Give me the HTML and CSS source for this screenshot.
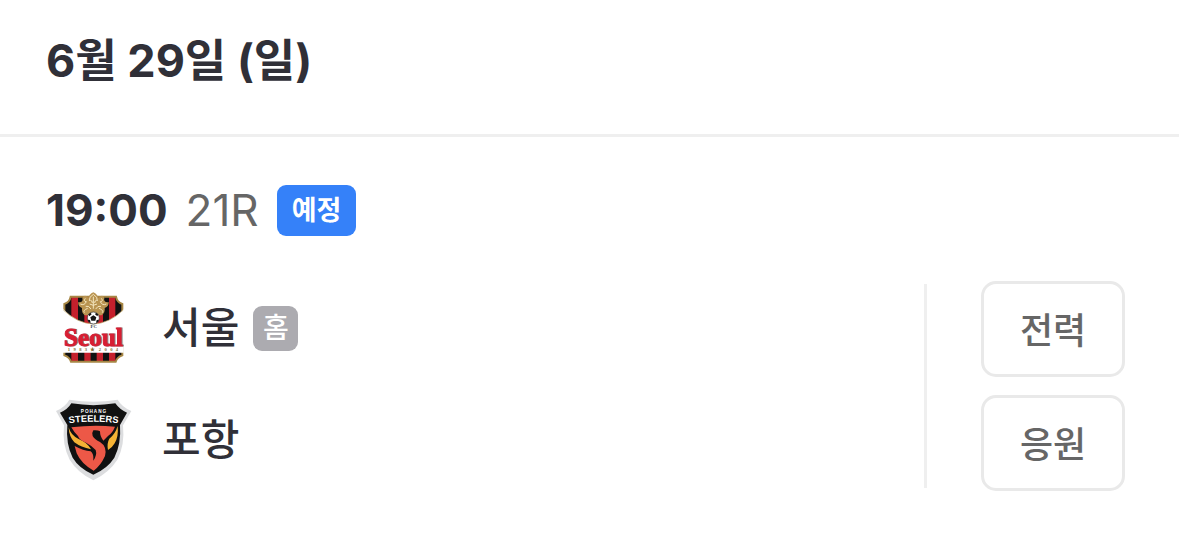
FILE: index.html
```
<!DOCTYPE html>
<html lang="ko">
<head>
    <meta charset="UTF-8">
    <meta name="viewport" content="width=device-width, initial-scale=1.0">
    <title>경기 일정</title>
    <link rel="stylesheet" href="styles.css">
</head>
<body>
    <header class="date-header">
        <h1>6월 29일 (일)</h1>
    </header>

    <main class="match">
        <div class="match-info">
            <span class="time">19:00</span>
            <span class="round">21R</span>
            <span class="status">예정</span>
        </div>

        <div class="match-body">
            <div class="teams">
                <div class="team">
                    <svg class="emblem" viewBox="3 18 252 252" aria-hidden="true">
                        <defs>
                            <clipPath id="shield">
                                <path d="M62 50H198Q201 67 217 72V226Q201 231 197 245H63Q59 231 43 226V72Q59 67 62 50Z"/>
                            </clipPath>
                        </defs>
                        <g clip-path="url(#shield)">
                            <rect x="40" y="45" width="180" height="205" fill="#111"/>
                            <path d="M64 45h20v205H64zM103 45h19v205h-19zM140 45h19v205h-19zM177 45h19v205h-19z" fill="#c5202c"/>
                        </g>
                        <path d="M62 50H198Q201 67 217 72V226Q201 231 197 245H63Q59 231 43 226V72Q59 67 62 50Z" fill="none" stroke="#a78745" stroke-width="6"/>
                        <path d="M36 84Q80 130 130 132Q180 130 225 84L221 202V218H37V202Z" fill="#fff"/>
                        <path d="M40 90Q82 130 130 132Q178 130 220 90" fill="none" stroke="#b79a59" stroke-width="2"/>
                        <path d="M104 106Q94 98 96 84Q83 79 85 66Q95 69 98 60Q94 51 105 47Q112 48 115 54Q117 43 130 37Q143 43 145 54Q149 48 156 47Q166 51 162 60Q166 69 176 66Q177 79 164 84Q166 98 155 106Z" fill="#b99451"/>
                        <path d="M91 72Q103 78 109 65Q99 65 106 55M169 72Q157 78 151 65Q161 65 154 55M118 63Q116 51 130 43Q144 51 142 63M113 85Q98 91 103 98M147 85Q162 91 157 98M119 72Q130 80 141 72M130 50V86M121 61Q127 61 127 69M140 61Q134 61 134 69M107 79Q117 76 123 87M153 79Q143 76 137 87" fill="none" stroke="#f4e6bf" stroke-width="3"/>
                        <circle cx="130" cy="114" r="18" fill="#fff" stroke="#333" stroke-width="2"/>
                        <path d="M130 106l9 6-3 10h-12l-3-10zM115 103l7-5 3 5-7 6zM145 103l-7-5-3 5 7 6zM113 119l7 1 2 8-6-1zM147 119l-7 1-2 8 6-1z" fill="#161616"/>
                        <text class="fc-text" x="131" y="145">FC</text>
                        <text class="seoul-text" x="130" y="197">Seoul</text>
                        <text class="year-text" x="134" y="213">1983★2004</text>
                    </svg>
                    <span class="team-name">서울</span>
                    <span class="home">홈</span>
                </div>
                <div class="team">
                    <svg class="emblem" viewBox="3 24 252 252" aria-hidden="true">
                        <path d="M58 29Q130 41 203 29Q216 51 244 63L219 106Q225 166 202 209Q178 247 130 271Q82 247 59 209Q36 166 42 106L18 63Q46 51 58 29Z" fill="#dcdddf"/>
                        <path d="M64 40Q130 51 196 40Q209 59 231 68L210 105Q214 162 193 203Q173 235 130 254Q87 235 68 203Q47 162 52 105L30 68Q53 59 64 40Z" fill="#111"/>
                        <path d="M56 112Q62 136 86 147Q112 157 123 178Q93 172 73 157Q57 140 56 112Z" fill="#f5b335"/>
                        <path d="M203 108Q206 140 194 160Q186 174 174 180Q170 160 178 146Q196 132 203 108Z" fill="#f5b335"/>
                        <path d="M64 112Q130 103 195 110Q188 128 174 138L160 152Q150 140 150 124Q144 120 130 121Q125 128 128 138Q134 149 150 156Q172 170 165 198Q152 227 131 242Q94 222 80 190L74 168Q100 182 122 184Q132 192 130 212Q142 195 137 180Q124 166 108 158Q88 150 84 138Q74 130 64 112Z" fill="#ed5847"/>
                        <path id="steelers-arc" d="M57 100Q130 90 205 100" fill="none"/>
                        <text class="pohang-text" x="132" y="70">POHANG</text>
                        <text class="steelers-text"><textPath href="#steelers-arc" startOffset="50%">STEELERS</textPath></text>
                    </svg>
                    <span class="team-name">포항</span>
                </div>
            </div>

            <div class="actions">
                <button type="button">전력</button>
                <button type="button">응원</button>
            </div>
        </div>
    </main>
</body>
</html>
```
FILE: styles.css
```
* {
    box-sizing: border-box;
}

body {
    margin: 0;
    font-family: Inter, "Noto Sans CJK KR", sans-serif;
    background-color: #fff;
    color: #303038;
}

.date-header {
    padding: 31px 46px 43px;
    border-bottom: 3px solid #efefef;
}

h1 {
    margin: 0;
    font-size: 45px;
    line-height: 60px;
    font-weight: 700;
}

.match {
    padding: 48px 54px 43px 46px;
}

.match-info {
    display: flex;
    align-items: center;
    gap: 18px;
    font-size: 44px;
    line-height: 51px;
}

.time {
    font-weight: 700;
}

.round {
    color: #666;
    font-weight: 400;
}

.status {
    padding: 0 15px;
    border-radius: 9px;
    background-color: #3581f9;
    color: #fff;
    font-size: 27px;
    font-weight: 700;
}

.match-body {
    display: flex;
    margin-top: 45px;
}

.teams {
    flex: 1;
    display: flex;
    flex-direction: column;
    gap: 28px;
    padding: 5px;
}

.team {
    display: flex;
    align-items: center;
}

.emblem {
    width: 84px;
    height: 84px;
    margin-right: 27px;
}

.team-name {
    font-size: 42px;
    line-height: 60px;
    font-weight: 500;
}

.home {
    width: 45px;
    margin-left: 14px;
    border-radius: 9px;
    background-color: #acabb0;
    color: #fff;
    font-size: 28px;
    font-weight: 500;
    line-height: 45px;
    text-align: center;
}

.actions {
    position: relative;
    display: flex;
    flex-direction: column;
    gap: 18px;
    padding-left: 57px;
}

/* divider, slightly shorter than the buttons */
.actions::before {
    content: "";
    position: absolute;
    top: 3px;
    bottom: 3px;
    left: 0;
    width: 3px;
    background-color: #efefef;
}

button {
    width: 144px;
    height: 96px;
    padding: 0 0 3px;
    border: 3px solid #e9e9e9;
    border-radius: 15px;
    background-color: #fff;
    color: #666;
    font-family: inherit;
    font-size: 36px;
    font-weight: 500;
    cursor: pointer;
}

.emblem text {
    text-anchor: middle;
}

.fc-text {
    font: bold 14px "Liberation Serif", serif;
    fill: #333;
}

.seoul-text {
    font: bold 76px "Liberation Serif", serif;
    fill: #d71f33;
    stroke: #d71f33;
    stroke-width: 3px;
    filter: drop-shadow(3px 0 0 #888);
}

.year-text {
    font: bold 14px "Liberation Serif", serif;
    letter-spacing: 10px;
    fill: #876c35;
}

.pohang-text {
    font: bold 14px "Liberation Sans", sans-serif;
    letter-spacing: 3px;
    fill: #fff;
}

.steelers-text {
    font: bold 28px "Liberation Sans", sans-serif;
    fill: #fff;
}
```
